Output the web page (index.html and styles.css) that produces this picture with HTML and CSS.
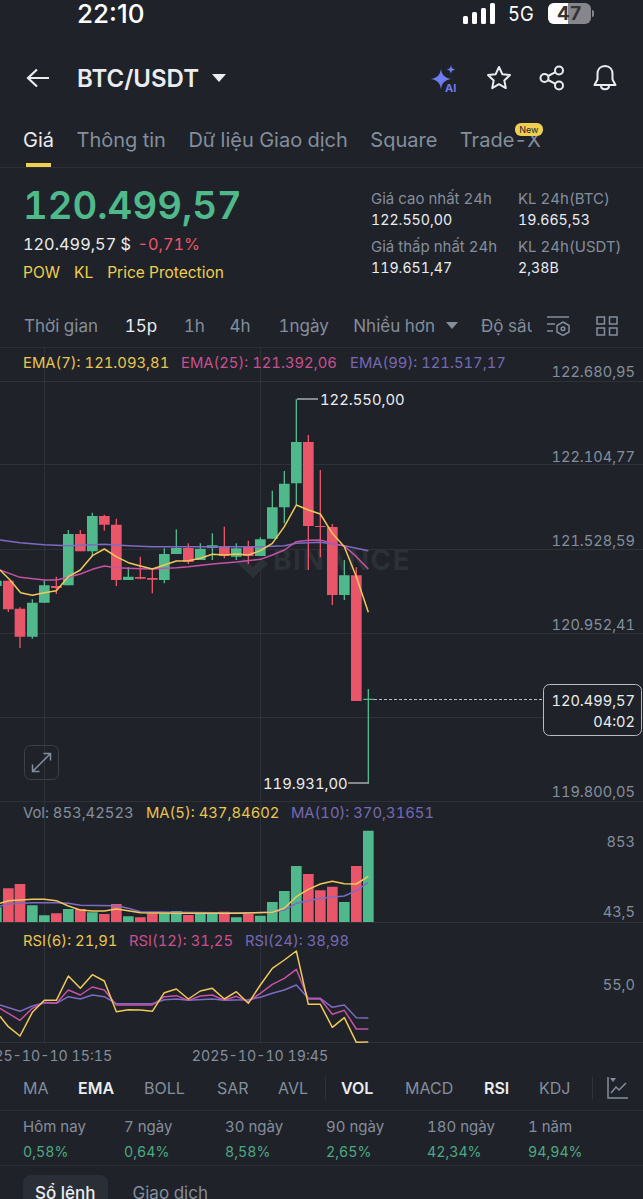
FILE: index.html
```html
<!DOCTYPE html>
<html lang="vi">
<head>
    <meta charset="UTF-8">
    <meta name="viewport" content="width=device-width, initial-scale=1.0">
    <title>BTC/USDT</title>
    <link rel="stylesheet" href="styles.css">
</head>
<body>
    <div class="status-bar">
        <span class="clock">22:10</span>
        <div class="status-right">
            <svg class="signal" width="33" height="21" viewBox="0 0 33 21" fill="#fff">
                <rect x="0" y="13" width="5" height="8" rx="1.5"/>
                <rect x="9" y="9" width="5" height="12" rx="1.5"/>
                <rect x="18" y="5" width="5" height="16" rx="1.5"/>
                <rect x="27" y="0" width="5" height="21" rx="1.5"/>
            </svg>
            <span class="network">5G</span>
            <div class="battery"><div class="battery-fill"></div><span>47</span></div>
            <div class="battery-tip"></div>
        </div>
    </div>

    <header class="top-bar">
        <svg class="back" width="24" height="20" viewBox="0 0 24 20" fill="none" stroke="#eaecef" stroke-width="2.2">
            <path d="M23 10H2M11 1.500L2 10l9 8.500"/>
        </svg>
        <span class="pair">BTC/USDT</span>
        <span class="caret"></span>
        <div class="top-icons">
            <svg width="30" height="30" viewBox="0 0 30 30">
                <path d="M12 6c1 6 3.500 8.500 10 10-6.500 1.500-9 4-10 10-1-6-3.500-8.500-10-10 6.500-1.500 9-4 10-10z" fill="#6f7cf0"/>
                <path d="M19 1c.5 3 1.500 4 4.500 4.500-3 .5-4 1.500-4.500 4.500-.5-3-1.500-4-4.500-4.500 3-.5 4-1.500 4.500-4.500z" fill="#6f7cf0" transform="translate(3 1)"/>
                <text class="ai-mark" x="16" y="29">AI</text>
            </svg>
            <svg width="26" height="26" viewBox="0 0 26 26" fill="none" stroke="#eaecef" stroke-width="2" stroke-linejoin="round">
                <path d="M13 2l3.300 7.200 7.700.9-5.700 5.300 1.500 7.700-6.800-3.900-6.800 3.900 1.500-7.700L2 10.100l7.700-.9z"/>
            </svg>
            <svg width="26" height="26" viewBox="0 0 26 26" fill="none" stroke="#eaecef" stroke-width="2">
                <circle cx="20" cy="5.500" r="4"/><circle cx="5.500" cy="13" r="4"/><circle cx="20" cy="20.500" r="4"/>
                <path d="M9 11l7.500-3.800M9 15l7.500 3.800"/>
            </svg>
            <svg width="26" height="28" viewBox="0 0 26 28" fill="none" stroke="#eaecef" stroke-width="2" stroke-linejoin="round">
                <path d="M13 2c-5 0-7.500 3.500-7.500 8v5.500L2.500 21h21l-3-5.500V10c0-4.500-2.500-8-7.500-8z"/>
                <path d="M9 21.500c0 5 8 5 8 0"/>
            </svg>
        </div>
    </header>

    <nav class="tabs">
        <a class="tab active">Giá</a>
        <a class="tab">Thông tin</a>
        <a class="tab">Dữ liệu Giao dịch</a>
        <a class="tab">Square</a>
        <a class="tab tab-new">Trade-X<span class="badge">New</span></a>
    </nav>

    <section class="summary">
        <div class="price-block">
            <div class="last-price">120.499,57</div>
            <div class="sub-price">120.499,57 $ <span class="neg">-0,71%</span></div>
            <div class="tags"><span>POW</span><span>KL</span><span>Price Protection</span></div>
        </div>
        <div class="stats-24h">
            <div><label>Giá cao nhất 24h</label><b>122.550,00</b></div>
            <div><label>KL 24h(BTC)</label><b>19.665,53</b></div>
            <div><label>Giá thấp nhất 24h</label><b>119.651,47</b></div>
            <div><label>KL 24h(USDT)</label><b>2,38B</b></div>
        </div>
    </section>

    <div class="intervals">
        <span class="iv iv-time">Thời gian</span>
        <span class="iv iv-15 on">15p</span>
        <span class="iv iv-1h">1h</span>
        <span class="iv iv-4h">4h</span>
        <span class="iv iv-day">1ngày</span>
        <span class="iv iv-more">Nhiều hơn</span>
        <span class="caret-small"></span>
        <span class="iv iv-depth">Độ sâu</span>
        <svg class="iv-icon" width="25" height="22" viewBox="0 0 25 22" fill="none" stroke="#848e9c" stroke-width="1.500">
            <path d="M1 2h22M1 9h8M1 16h6"/>
            <path d="M17 7l6 3.500v6.500l-6 3.500-6-3.500v-6.500z"/>
            <circle cx="17" cy="13.800" r="1.800"/>
        </svg>
        <svg class="iv-icon" width="22" height="20" viewBox="0 0 22 20" fill="none" stroke="#848e9c" stroke-width="1.500">
            <rect x="1" y="1" width="7.500" height="7"/><rect x="13.500" y="1" width="7.500" height="7"/>
            <rect x="1" y="12" width="7.500" height="7"/><rect x="13.500" y="12" width="7.500" height="7"/>
        </svg>
    </div>

    <section class="pane pane-main">
        <div class="legend">
            <span class="yellow l-a">EMA(7): 121.093,81</span>
            <span class="pink l-b">EMA(25): 121.392,06</span>
            <span class="purple l-c">EMA(99): 121.517,17</span>
        </div>
        <svg class="chart" width="643" height="454" viewBox="0 348 643 454">
            <path class="grid" d="M0 381.500H643M0 464.500H643M0 549.500H643M0 633.500H643M0 717.500H643M0 801.500H643M44.500 348V802M260.500 348V802"/>
            <text class="watermark" x="273" y="570">BINANCE</text>
            <path class="watermark-logo" d="M238 564l6-6 9 9 9-9 6 6-15 14z"/>
            <g transform="translate(0 380) scale(.33333)">
                <path class="wick up" d="M97 658V776M133 600V668M205 450V616M277 398V530M385 562V600M493 505V610M529 448V522M601 490V540M637 460V540M709 490V540M781 472V528M817 332V476M853 273V430M889 58V375M1033 540V660M1105 927V1209M1090 958H1122"/>
                <path class="wick down" d="M25 602V696M60 682V804M169 590V642M241 450V514M313 404V452M349 416V618M421 530V598M457 565V640M565 490V552M673 440V535M745 482V552M925 165V570M961 270V532M997 432V675M1069 562V963"/>
                <path class="body up" d="M-27 602h32V618h-32zM81 668h32V770h-32zM117 616h32V668h-32zM189 462h32V616h-32zM261 408h32V514h-32zM369 590h32V600h-32zM477 522h32V600h-32zM513 504h32V522h-32zM585 506h32V540h-32zM621 496h32V504h-32zM693 505h32V530h-32zM765 478h32V528h-32zM801 382h32V476h-32zM837 311h32V382h-32zM873 186h32V310h-32zM1017 586h32V645h-32z"/>
                <path class="body down" d="M9 602h32V688h-32zM44 686h32V770h-32zM153 618h32V624h-32zM225 462h32V514h-32zM297 408h32V434h-32zM333 434h32V600h-32zM405 591h32V596h-32zM441 594h32V599h-32zM549 504h32V546h-32zM657 498h32V528h-32zM729 500h32V528h-32zM909 186h32V438h-32zM945 438h32V441h-32zM981 441h32V645h-32zM1053 586h32V963h-32z"/>
                <polyline class="line purple-line" points="0,480 60,488 133,494 205,497 313,493 385,497 457,500 565,500 709,500 781,500 853,497 889,490 961,487 1033,497 1105,512"/>
                <polyline class="line pink-line" points="0,570 60,592 133,600 169,600 205,592 241,582 277,568 313,558 349,563 421,566 457,567 529,563 565,560 637,552 709,546 781,538 817,525 853,510 889,485 925,481 961,480 997,490 1033,498 1069,530 1105,567"/>
                <polyline class="line yellow-line" points="0,570 30,600 62,638 97,646 133,638 169,632 205,590 241,570 277,527 313,507 349,530 385,548 421,558 457,567 493,555 529,543 565,542 601,535 637,523 673,525 709,522 745,525 781,512 817,490 853,440 889,375 925,390 961,402 997,460 1033,500 1069,590 1105,697"/>
            </g>
            <path class="mark" d="M297 399H318M348 783H369"/>
            <text class="hi-lo" x="320" y="404.500">122.550,00</text>
            <text class="hi-lo" x="263" y="788.500">119.931,00</text>
            <text class="axis" x="635" y="377">122.680,95</text>
            <text class="axis" x="635" y="462">122.104,77</text>
            <text class="axis" x="635" y="546">121.528,59</text>
            <text class="axis" x="635" y="630">120.952,41</text>
            <text class="axis" x="635" y="797">119.800,05</text>
            <path class="dash" d="M374 699.500H543"/>
            <rect class="now-box" x="543.500" y="684.500" width="98" height="51" rx="6"/>
            <text class="now" x="635" y="705.500">120.499,57</text>
            <text class="now" x="635" y="726.500">04:02</text>
            <rect class="expand" x="24.500" y="745.500" width="34" height="34" rx="6"/>
            <path class="expand-icon" d="M33 771l17-17M43.500 753.500H50.500V760.500M32.500 764.500V771.500H39.500"/>
        </svg>
    </section>

    <section class="pane pane-vol">
        <div class="legend">
            <span class="grey l-a">Vol: 853,42523</span>
            <span class="yellow l-d">MA(5): 437,84602</span>
            <span class="purple l-e">MA(10): 370,31651</span>
        </div>
        <svg class="chart" width="643" height="120" viewBox="0 802 643 120">
            <path class="grid" d="M44.500 802V922M260.500 802V922"/>
            <g transform="translate(0 800) scale(.33333)">
                <path class="body up" d="M-27 322h32V367h-32zM81 316h32V367h-32zM117 346h32V367h-32zM189 327h32V367h-32zM261 337h32V367h-32zM369 349h32V367h-32zM477 340h32V367h-32zM513 333h32V367h-32zM585 338h32V367h-32zM621 338h32V367h-32zM693 352h32V367h-32zM765 347h32V367h-32zM801 306h32V367h-32zM837 273h32V367h-32zM873 198h32V367h-32zM1017 306h32V367h-32zM1089 92h32V367h-32z"/>
                <path class="body down" d="M9 265h32V367h-32zM44 252h32V367h-32zM153 340h32V367h-32zM225 327h32V367h-32zM297 342h32V367h-32zM333 312h32V367h-32zM405 352h32V367h-32zM441 340h32V367h-32zM549 345h32V367h-32zM657 335h32V367h-32zM729 342h32V367h-32zM909 222h32V367h-32zM945 271h32V367h-32zM981 260h32V367h-32zM1053 198h32V367h-32z"/>
                <polyline class="line purple-line" points="0,318 25,312 97,308 169,308 205,310 241,316 349,317 385,325 421,335 529,337 709,339 817,337 853,330 889,310 925,302 961,295 1033,288 1069,272 1105,247"/>
                <polyline class="line yellow-line" points="0,310 25,302 97,298 133,298 169,302 205,318 241,330 277,333 313,333 349,327 385,332 421,338 529,340 637,340 709,340 817,337 853,325 889,290 925,268 961,252 997,244 1033,251 1069,252 1105,229"/>
            </g>
            <text class="axis" x="635" y="847">853</text>
            <text class="axis" x="635" y="917">43,5</text>
        </svg>
    </section>

    <section class="pane pane-rsi">
        <div class="legend">
            <span class="yellow l-a">RSI(6): 21,91</span>
            <span class="pink l-f">RSI(12): 31,25</span>
            <span class="purple l-g">RSI(24): 38,98</span>
        </div>
        <svg class="chart" width="643" height="144" viewBox="0 922 643 144">
            <path class="grid" d="M0 922.500H643M44.500 922V1043M260.500 922V1043M0 1042.500H643"/>
            <g transform="translate(0 925) scale(.33333)">
                <polyline class="line purple-line" points="0,240 60,259 97,243 133,233 169,235 205,215 241,222 277,210 313,215 349,236 457,236 493,224 529,222 565,226 637,222 673,226 745,224 781,217 817,205 853,195 889,180 925,220 961,220 997,247 1033,240 1069,278 1105,279"/>
                <polyline class="line pink-line" points="0,250 60,286 97,250 133,232 169,235 205,195 241,210 277,186 313,195 349,240 457,240 493,215 529,212 565,226 601,213 637,210 673,226 709,214 745,230 781,205 817,178 853,160 889,133 925,222 961,222 997,268 1033,256 1069,312 1105,312"/>
                <polyline class="line yellow-line" points="0,274 25,305 60,333 97,262 133,226 169,226 205,153 241,190 277,149 313,168 349,260 385,254 421,255 457,259 493,203 529,192 565,222 601,198 637,190 673,222 709,200 745,235 781,180 817,130 853,105 889,78 925,238 961,238 997,307 1033,278 1069,352 1105,351"/>
            </g>
            <text class="axis" x="635" y="990">55,0</text>
            <text class="date" x="44" y="1061">2025-10-10 15:15</text>
            <text class="date" x="260" y="1061">2025-10-10 19:45</text>
        </svg>
    </section>

    <div class="indicators">
        <span class="ind i-ma">MA</span>
        <span class="ind i-ema on">EMA</span>
        <span class="ind i-boll">BOLL</span>
        <span class="ind i-sar">SAR</span>
        <span class="ind i-avl">AVL</span>
        <span class="sep"></span>
        <span class="ind i-vol on">VOL</span>
        <span class="ind i-macd">MACD</span>
        <span class="ind i-rsi on">RSI</span>
        <span class="ind i-kdj">KDJ</span>
        <span class="sep sep-2"></span>
        <svg class="ind-icon" width="21" height="22" viewBox="0 0 21 22" fill="none" stroke="#848e9c" stroke-width="1.500">
            <path d="M1 0V21H21M4 16l5-6 3 3 7-7"/>
            <path d="M3 1h6l-3 4z" fill="#848e9c" stroke="none"/>
        </svg>
    </div>

    <div class="performance">
        <div><label>Hôm nay</label><b>0,58%</b></div>
        <div><label>7 ngày</label><b>0,64%</b></div>
        <div><label>30 ngày</label><b>8,58%</b></div>
        <div><label>90 ngày</label><b>2,65%</b></div>
        <div><label>180 ngày</label><b>42,34%</b></div>
        <div><label>1 năm</label><b>94,94%</b></div>
    </div>

    <div class="book-tabs">
        <span class="book-tab active">Sổ lệnh</span>
        <span class="book-tab">Giao dịch</span>
    </div>
</body>
</html>
```

FILE: styles.css
```css
html, body {
    margin: 0;
    height: 1199px;
    overflow: hidden;
}

body {
    background-color: #1f2229;
    color: #eaecef;
    font-family: Inter, "Noto Sans", sans-serif;
    font-variant-numeric: tabular-nums;
    width: 643px;
}

/* status bar */
.status-bar {
    height: 27px;
    display: flex;
    justify-content: space-between;
    align-items: center;
    padding: 0 49px 0 77px;
}

.clock {
    font-size: 26px;
    font-weight: 500;
    color: #fff;
    font-variant-numeric: normal;
}

.status-right {
    display: flex;
    align-items: center;
}

.signal {
    margin-right: 12px;
}

.network {
    font-size: 20px;
    color: #fff;
    width: 40px;
    transform: scaleX(.92);
    transform-origin: left;
}

.battery {
    position: relative;
    width: 43px;
    height: 21px;
    border-radius: 6px;
    background-color: #85878c;
    overflow: hidden;
    text-align: center;
    font-size: 19px;
    line-height: 21px;
    font-weight: 700;
    color: #333;
}

.battery-fill {
    position: absolute;
    left: 0;
    top: 0;
    bottom: 0;
    width: 47%;
    background-color: #fff;
}

.battery span {
    position: relative;
}

.battery-tip {
    width: 2px;
    height: 7px;
    margin-left: 1px;
    background-color: #85878c;
    border-radius: 0 2px 2px 0;
}

/* header */
.top-bar {
    height: 68px;
    margin-top: 17px;
    display: flex;
    align-items: center;
    padding: 0 25px 0 26px;
}

.pair {
    font-size: 24px;
    font-weight: 600;
    margin-left: 27px;
}

.caret {
    width: 0;
    height: 0;
    margin-left: 13px;
    border-left: 7px solid transparent;
    border-right: 7px solid transparent;
    border-top: 8px solid #eaecef;
}

.top-icons {
    margin-left: auto;
    display: flex;
    align-items: center;
    gap: 27px;
}

.ai-mark {
    font-size: 11px;
    font-weight: 700;
    fill: #6f7cf0;
}

/* tabs */
.tabs {
    display: flex;
    gap: 22.500px;
    padding: 0 23px;
    height: 56px;
    border-bottom: 1px solid #2b2f36;
    box-sizing: border-box;
}

.tab {
    position: relative;
    font-size: 20px;
    line-height: 26px;
    padding-top: 15px;
    color: #848e9c;
}

.tab.active {
    color: #eaecef;
}

.tab.active::after {
    content: "";
    position: absolute;
    left: 3px;
    right: 3px;
    top: 51px;
    height: 4px;
    background-color: #f0cf4f;
}

.badge {
    position: absolute;
    left: 55px;
    top: 11px;
    width: 28px;
    height: 13px;
    border-radius: 6px;
    background-color: #f0cf4f;
    color: #202630;
    font-size: 9px;
    line-height: 13px;
    text-align: center;
}

/* price summary */
.summary {
    display: flex;
    justify-content: space-between;
    height: 136px;
    padding: 12px 0 0 23px;
    box-sizing: border-box;
}

.last-price {
    font-size: 38.300px;
    font-weight: 600;
    line-height: 50px;
    color: #50b98c;
}

.sub-price {
    font-size: 16.300px;
    line-height: 24px;
    margin-top: 2px;
}

.neg {
    color: #e9566a;
    margin-left: 2px;
}

.tags {
    display: flex;
    gap: 14px;
    margin-top: 5px;
    font-size: 15.500px;
    line-height: 24px;
    color: #f0cf4f;
}

.stats-24h {
    display: grid;
    grid-template-columns: 147px 125px;
    grid-auto-rows: 48px;
    font-size: 15px;
    line-height: 21px;
    padding-top: 8px;
}

.stats-24h label, .performance label {
    display: block;
    color: #848e9c;
}

.stats-24h b {
    display: block;
    font-size: 14.200px;
    font-weight: 400;
    color: #eaecef;
}

/* interval row */
.intervals {
    display: flex;
    align-items: center;
    height: 44px;
    border-bottom: 1px solid #2b2f36;
    font-size: 17px;
    box-sizing: border-box;
}

.iv {
    color: #848e9c;
    white-space: nowrap;
}

.iv.on {
    color: #eaecef;
}

.iv-time { margin-left: 24px; width: 101px; }
.iv-15 { width: 59px; }
.iv-1h { width: 46px; }
.iv-4h { width: 49px; }
.iv-day { width: 75px; }
.iv-more { width: 93px; }
.iv-depth { width: 51px; overflow: hidden; margin-left: 23px; margin-right: 14px; }
.iv-icon { flex: none; margin-right: 25px; }

.caret-small {
    width: 0;
    height: 0;
    border-left: 6px solid transparent;
    border-right: 6px solid transparent;
    border-top: 7px solid #848e9c;
}

/* chart panes */
.pane {
    position: relative;
}

.chart {
    display: block;
}

.legend {
    position: absolute;
    left: 0;
    top: 0;
    font-size: 14.800px;
    white-space: nowrap;
    line-height: 22px;
}

.legend span {
    position: absolute;
    top: 4px;
}

.pane-vol .legend span {
    top: 0;
}

.pane-rsi .legend span {
    top: 8px;
}

.yellow { color: #e8c64f; }
.pink { color: #c9508f; }
.purple { color: #7669b4; }
.grey { color: #848e9c; }

.l-a { left: 23px; }
.l-b { left: 181px; }
.l-c { left: 350px; }
.l-d { left: 146px; }
.l-e { left: 291px; }
.l-f { left: 129px; }
.l-g { left: 245px; }

.grid {
    stroke: #2d3138;
    stroke-width: 1;
    fill: none;
}

.wick {
    fill: none;
    stroke-width: 4;
}

.wick.up { stroke: #50b98c; }
.wick.down { stroke: #e9566a; }
.body.up { fill: #50b98c; }
.body.down { fill: #e9566a; }

.line {
    fill: none;
    stroke-width: 4.500;
    stroke-linejoin: round;
}

.yellow-line { stroke: #f0c95a; }
.pink-line { stroke: #c453a6; }
.purple-line { stroke: #7d6bc4; }

.watermark {
    font-size: 28px;
    font-weight: 700;
    letter-spacing: 1.500px;
    fill: #2c3037;
}

.watermark-logo {
    fill: #2c3037;
}

.mark {
    stroke: #a7acb4;
    stroke-width: 1.500;
    fill: none;
}

.hi-lo {
    font-size: 14.800px;
    fill: #eaecef;
}

.axis {
    font-size: 14.600px;
    fill: #848e9c;
    text-anchor: end;
}

.dash {
    stroke: #b7bdc6;
    stroke-dasharray: 3 2;
    fill: none;
}

.now-box {
    fill: #1f2229;
    stroke: #b7bdc6;
}

.now {
    font-size: 14.600px;
    fill: #eaecef;
    text-anchor: end;
}

.expand {
    fill: none;
    stroke: #3c4048;
}

.expand-icon {
    fill: none;
    stroke: #848e9c;
    stroke-width: 1.500;
}

.date {
    font-size: 14.200px;
    fill: #848e9c;
    text-anchor: middle;
}

/* indicators */
.indicators {
    display: flex;
    align-items: center;
    height: 45px;
    font-size: 16px;
    border-bottom: 1px solid #2b2f36;
    box-sizing: border-box;
}

.ind {
    color: #848e9c;
}

.ind.on {
    color: #eaecef;
    font-weight: 600;
}

.i-ma { margin-left: 23px; width: 55px; }
.i-ema { width: 66px; }
.i-boll { width: 73px; }
.i-sar { width: 61px; }
.i-avl { width: 47px; }
.i-vol { width: 64px; margin-left: 15px; }
.i-macd { width: 79px; }
.i-rsi { width: 55px; }
.i-kdj { width: 53px; }

.sep {
    width: 1px;
    height: 22px;
    background-color: #2f333a;
}

.sep-2 { margin-right: 14px; }

.performance {
    display: grid;
    grid-template-columns: repeat(6, 101px);
    padding: 3px 0 0 23px;
    height: 55px;
    box-sizing: border-box;
    border-bottom: 1px solid #2b2f36;
    font-size: 15px;
    line-height: 25px;
}

.performance b {
    display: block;
    font-size: 14.200px;
    font-weight: 400;
    color: #4da883;
}

.book-tabs {
    display: flex;
    padding: 9px 23px 0;
    font-size: 17px;
}

.book-tab {
    height: 40px;
    line-height: 36px;
    padding: 0 12px;
    margin-right: 13px;
    color: #848e9c;
    border-radius: 8px;
}

.book-tab.active {
    background-color: #2a2f37;
    color: #eaecef;
    font-weight: 500;
}
```
